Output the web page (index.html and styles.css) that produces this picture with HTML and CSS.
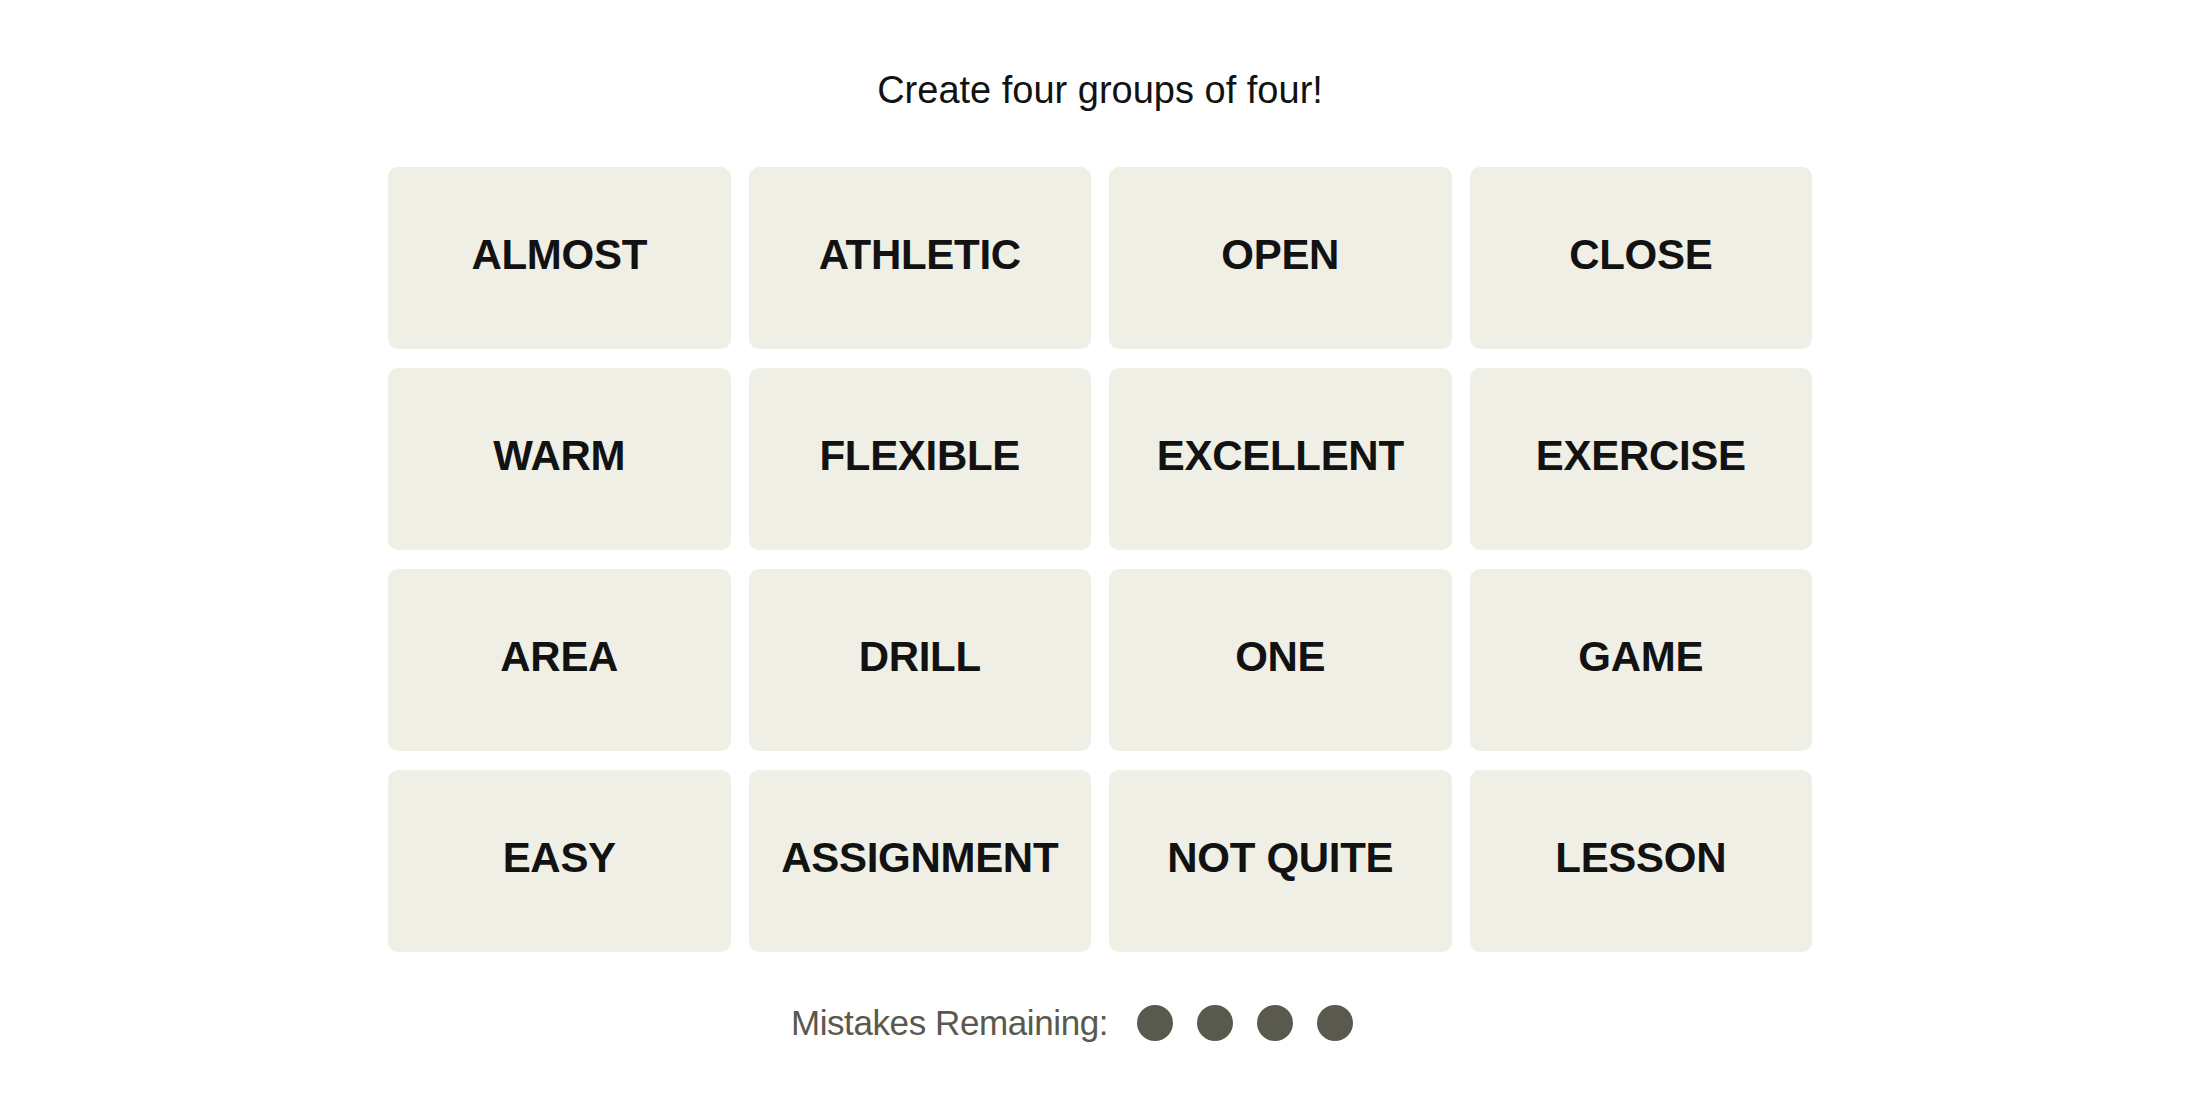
FILE: index.html
```html
<!DOCTYPE html>
<html lang="en">
<head>
  <meta charset="UTF-8" />
  <title>Connections</title>
  <link rel="stylesheet" href="styles.css">
</head>
<body>

  <!-- Game board -->
  <main class="game">
    <p class="prompt">Create four groups of four!</p>

    <div class="board">
      <button class="tile">ALMOST</button>
      <button class="tile">ATHLETIC</button>
      <button class="tile">OPEN</button>
      <button class="tile">CLOSE</button>
      <button class="tile">WARM</button>
      <button class="tile">FLEXIBLE</button>
      <button class="tile">EXCELLENT</button>
      <button class="tile">EXERCISE</button>
      <button class="tile">AREA</button>
      <button class="tile">DRILL</button>
      <button class="tile">ONE</button>
      <button class="tile">GAME</button>
      <button class="tile">EASY</button>
      <button class="tile">ASSIGNMENT</button>
      <button class="tile">NOT QUITE</button>
      <button class="tile">LESSON</button>
    </div>

    <div class="mistakes">
      <span class="mistakes-label">Mistakes Remaining:</span>
      <span class="dots">
        <span class="dot"></span>
        <span class="dot"></span>
        <span class="dot"></span>
        <span class="dot"></span>
      </span>
    </div>
  </main>

</body>
</html>
```

FILE: styles.css
```css
* {
  box-sizing: border-box;
  margin: 0;
  padding: 0;
}

body {
  background: #fff;
  font-family: 'Liberation Sans', Arial, sans-serif;
  color: #121212;
}

.game {
  width: 1424px;
  margin: 0 auto;
  padding-top: 68px;
}

.prompt {
  text-align: center;
  font-size: 38px;
  line-height: 44px;
  color: #121212;
  margin-bottom: 55px;
}

.board {
  display: grid;
  grid-template-columns: repeat(4, 1fr);
  grid-auto-rows: 182px;
  column-gap: 18px;
  row-gap: 19px;
}

.tile {
  display: flex;
  align-items: center;
  justify-content: center;
  background: #efefe6;
  border: none;
  border-radius: 10px;
  font-family: 'Liberation Sans', Arial, sans-serif;
  font-size: 42px;
  font-weight: bold;
  letter-spacing: -0.3px;
  color: #121212;
  padding-bottom: 6px;
  cursor: pointer;
}

.mistakes {
  display: flex;
  align-items: center;
  justify-content: center;
  margin-top: 50px;
  padding-right: 56px;
}

.mistakes-label {
  font-size: 35px;
  line-height: 40px;
  letter-spacing: -0.4px;
  color: #5a594e;
  padding-top: 1px;
  margin-right: 29px;
}

.dots {
  display: flex;
  gap: 24px;
}

.dot {
  width: 36px;
  height: 36px;
  border-radius: 50%;
  background: #5a594e;
}
```
